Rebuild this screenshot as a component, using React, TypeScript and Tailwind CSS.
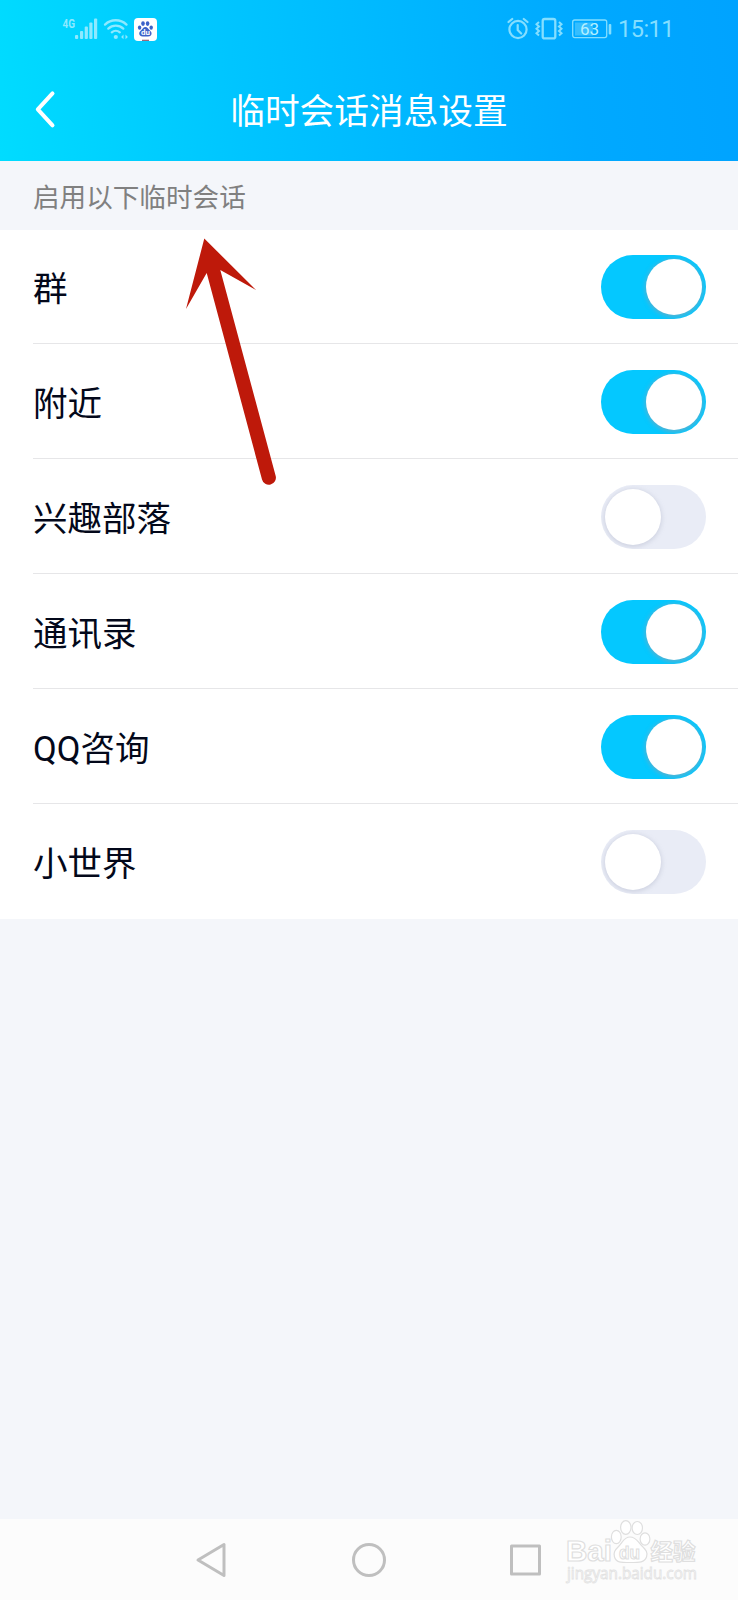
import React, { useState } from 'react';
import { clsx } from 'clsx';

const SESSIONS = [
  { id: 'group', label: '群', enabled: true },
  { id: 'nearby', label: '附近', enabled: true },
  { id: 'tribe', label: '兴趣部落', enabled: false },
  { id: 'contacts', label: '通讯录', enabled: true },
  { id: 'consult', label: 'QQ咨询', enabled: true },
  { id: 'world', label: '小世界', enabled: false },
];

function StatusBar() {
  return (
    <div className="flex h-[58px] items-center justify-between pl-[62px] pr-[65px] text-[#8ee9ff]">
      <div className="flex items-center">
        <svg width="36" height="24" viewBox="0 0 36 24" fill="currentColor">
          <text x="0.5" y="10.5" fontSize="13" fontWeight="700" fontFamily="Roboto, sans-serif" textLength="12.5" lengthAdjust="spacingAndGlyphs">4G</text>
          <rect x="13" y="18" width="3.2" height="4" rx="1" />
          <rect x="18" y="14" width="3.2" height="8" rx="1" />
          <rect x="22.7" y="9.5" width="3.2" height="12.5" rx="1" />
          <rect x="27.3" y="5.5" width="3.2" height="16.5" rx="1" />
          <rect x="32" y="1.5" width="3.2" height="20.5" rx="1" />
        </svg>
        <svg className="ml-[5px]" width="26" height="24" viewBox="0 0 26 24" fill="none" stroke="currentColor" strokeWidth="2.3" strokeLinecap="round">
          <path d="M2 7.6a15.5 15.5 0 0 1 21.5 0" />
          <path d="M5.3 11.6a11 11 0 0 1 15 0" />
          <path d="M8.8 15.3a6.2 6.2 0 0 1 8 0" />
          <circle cx="12.8" cy="20" r="2.1" fill="currentColor" stroke="none" />
          <path d="M20.5 17.5v4.8l-2.4-2.400zM22.500 17.500v4.800l2.400-2.400z" fill="currentColor" stroke="none" />
        </svg>
        <div className="ml-[5px] flex size-[23px] items-center justify-center rounded-[4px] bg-white">
          <svg width="23" height="23" viewBox="0 0 23 23">
            <g fill="#3c62c9">
              <ellipse cx="5.6" cy="9.6" rx="1.7" ry="2.2" />
              <ellipse cx="9" cy="5.6" rx="1.8" ry="2.4" />
              <ellipse cx="13.6" cy="5.6" rx="1.8" ry="2.4" />
              <ellipse cx="17.2" cy="9.6" rx="1.7" ry="2.2" />
              <path d="M11.4 9c2 0 2.6 1.8 4 3 2 1.6 2.5 2.8 2 4.4-.5 1.7-2.3 2-6 2s-5.5-.3-6-2c-.5-1.6 0-2.8 2-4.400 1.400-1.200 2-3 4-3z" />
            </g>
            <text x="7" y="17" fontSize="8" fontWeight="700" fill="#fff" fontFamily="Roboto, sans-serif">du</text>
            <rect x="8" y="21.7" width="7" height="1.3" fill="#9a6a7c" />
          </svg>
        </div>
      </div>

      <div className="flex items-center text-[#84deff]">
        <svg width="22" height="24" viewBox="0 0 22 24" fill="none" stroke="currentColor" strokeWidth="2.2" strokeLinecap="round">
          <circle cx="11" cy="12.5" r="8.6" />
          <path d="M10.7 8v5l3.5 3.5" />
          <path d="M1.5 5l3.7-3M20.5 5l-3.7-3" />
        </svg>
        <svg className="ml-[6px]" width="28" height="24" viewBox="0 0 28 24" fill="none" stroke="currentColor" strokeWidth="2.3">
          <rect x="7.7" y="2" width="12.6" height="19.4" rx="2" />
          <path d="M4 5L1.500 7.300 4 9.500 1.500 11.800 4 14 1.500 16.300 4 18.500" strokeWidth="2" />
          <path d="M24 5l2.500 2.300L24 9.500l2.500 2.300L24 14l2.500 2.300L24 18.500" strokeWidth="2" />
        </svg>
        <svg className="ml-[9px]" width="40" height="24" viewBox="0 0 40 24">
          <rect x="0.7" y="3" width="34" height="17.6" rx="2" fill="none" stroke="currentColor" strokeWidth="1.3" />
          <rect x="3" y="5.5" width="18" height="13" fill="currentColor" opacity="0.4" />
          <rect x="36.7" y="7" width="2.6" height="10.5" rx="1" fill="currentColor" />
          <text x="8" y="17.7" fontSize="17" fill="#b5f0ff" fontFamily="Roboto, sans-serif">63</text>
        </svg>
        <span className="-mr-px ml-[6px] pt-[2px] text-[23.5px] leading-none tracking-[-0.5px]">15:11</span>
      </div>
    </div>
  );
}

function Header() {
  return (
    <header className="h-[161px] bg-[linear-gradient(84deg,#00dcff_0%,#00c5ff_32%,#00a9ff_78%,#00a3ff_100%)]">
      <StatusBar />
      <div className="flex h-[103px] items-center px-[34px]">
        <button aria-label="返回" className="w-[44px]">
          <svg width="24" height="40" viewBox="0 0 24 40" fill="none" stroke="#fff" strokeWidth="4" strokeLinecap="round" strokeLinejoin="round">
            <path d="M18.5 3.4L3.800 19.400l14.700 16" />
          </svg>
        </button>
        <h1 className="flex-1 pt-[5px] text-center text-[34.7px] leading-[50px] text-white">临时会话消息设置</h1>
        <div className="w-[44px]" />
      </div>
    </header>
  );
}

function Toggle({ checked, onChange }: { checked: boolean; onChange: () => void }) {
  return (
    <button
      role="switch"
      aria-checked={checked}
      onClick={onChange}
      className={clsx(
        'flex h-[64px] w-[104.5px] items-center overflow-hidden rounded-full px-[4px]',
        checked ? 'justify-end bg-[#04c8ff]' : 'justify-start bg-[#e9ecf6]'
      )}
    >
      <span
        className={clsx(
          'size-[56px] rounded-full bg-white',
          checked
            ? 'shadow-[0_1px_4px_1px_rgba(130,165,185,0.65)]'
            : 'shadow-[0_1px_4px_1px_rgba(160,165,190,0.35)]'
        )}
      />
    </button>
  );
}

function NavBar() {
  return (
    <nav className="flex h-[81px] items-center bg-[#fcfcfc] pl-[194px] text-[#bfbfbf]">
      <svg width="34" height="38" viewBox="0 0 34 38" fill="none" stroke="currentColor" strokeWidth="3" strokeLinejoin="round">
        <path d="M30 3.5v31L4 19z" />
      </svg>
      <svg className="ml-[122px]" width="38" height="38" viewBox="0 0 38 38" fill="none" stroke="currentColor" strokeWidth="3">
        <circle cx="19" cy="19" r="15.5" />
      </svg>
      <svg className="ml-[119px]" width="38" height="38" viewBox="0 0 38 38" fill="none" stroke="currentColor" strokeWidth="3" strokeLinejoin="round">
        <rect x="4.5" y="5" width="28" height="28" />
      </svg>
    </nav>
  );
}

function Arrow() {
  return (
    <svg className="pointer-events-none absolute left-[180px] top-[234px]" width="110" height="260" viewBox="180 234 110 260">
      <path d="M204.300 238.500L256 290L220.300 270L275.700 476A6.900 6.900 0 0 1 262 479.500L206.700 273L186 309z" fill="#be190a" />
    </svg>
  );
}

function Watermark() {
  return (
    <svg className="pointer-events-none absolute left-[560px] top-[1515px]" width="145" height="75" viewBox="560 1515 145 75">
      <g fill="#fff" stroke="#dfdfdf" strokeWidth="1.2">
        <text x="566" y="1561" fontSize="30" fontWeight="700" fontFamily="Liberation Sans, sans-serif" textLength="46" lengthAdjust="spacingAndGlyphs">Bai</text>
        <ellipse cx="616.3" cy="1537" rx="4.9" ry="6.7" />
        <ellipse cx="625.8" cy="1527.5" rx="5.2" ry="6.8" />
        <ellipse cx="637.3" cy="1528" rx="5.2" ry="6.5" />
        <ellipse cx="645" cy="1539" rx="4.9" ry="6.2" />
        <path d="M630 1537c6 0 8 5 11.500 8.500 5 5 6.500 7 5 11.500-1.800 5.500-7 5.500-16.500 5.500s-14 0-15.500-5.500c-1.200-4.500 0-6.500 4.500-11 3.500-3.500 5-9 11-9z" />
        <text x="619" y="1559" fontSize="19" fontWeight="700" fontFamily="Liberation Sans, sans-serif" textLength="21" lengthAdjust="spacingAndGlyphs">du</text>
        <text x="650.5" y="1559.5" fontSize="23" fontWeight="700" fontFamily="Noto Sans CJK SC, sans-serif" textLength="45" lengthAdjust="spacingAndGlyphs">经验</text>
      </g>
      <text x="567" y="1579" fontSize="15.5" fill="#fff" stroke="#e2e2e2" strokeWidth="0.8" fontFamily="Open Sans, sans-serif" textLength="130" lengthAdjust="spacingAndGlyphs">jingyan.baidu.com</text>
    </svg>
  );
}

export default function App() {
  const [sessions, setSessions] = useState(SESSIONS);

  const toggle = (id: string) => {
    setSessions(sessions.map((s) => (s.id === id ? { ...s, enabled: !s.enabled } : s)));
  };

  return (
    <div className="relative flex h-[1600px] w-[738px] flex-col overflow-hidden bg-[#f4f6fa] font-[Roboto,'Noto_Sans_CJK_SC',sans-serif]">
      <Header />

      <main className="flex-1">
        <h2 className="flex h-[69px] items-center pl-[33px] pt-[4px] text-[26.6px] text-[#808080]">启用以下临时会话</h2>
        <ul className="bg-white">
          {sessions.map((s, i) => (
            <li key={s.id} className="pl-[33px]">
              <div
                className={clsx(
                  'flex items-center justify-between border-b pr-[32.5px]',
                  i === 0 ? 'h-[114px]' : 'h-[115px] pt-px',
                  i < sessions.length - 1 ? 'border-[#e6e6e8]' : 'border-transparent'
                )}
              >
                <span className="pt-[5px] text-[34.5px] leading-[50px] text-[#03081a]">{s.label}</span>
                <Toggle checked={s.enabled} onChange={() => toggle(s.id)} />
              </div>
            </li>
          ))}
        </ul>
      </main>

      <NavBar />
      <Arrow />
      <Watermark />
    </div>
  );
}
